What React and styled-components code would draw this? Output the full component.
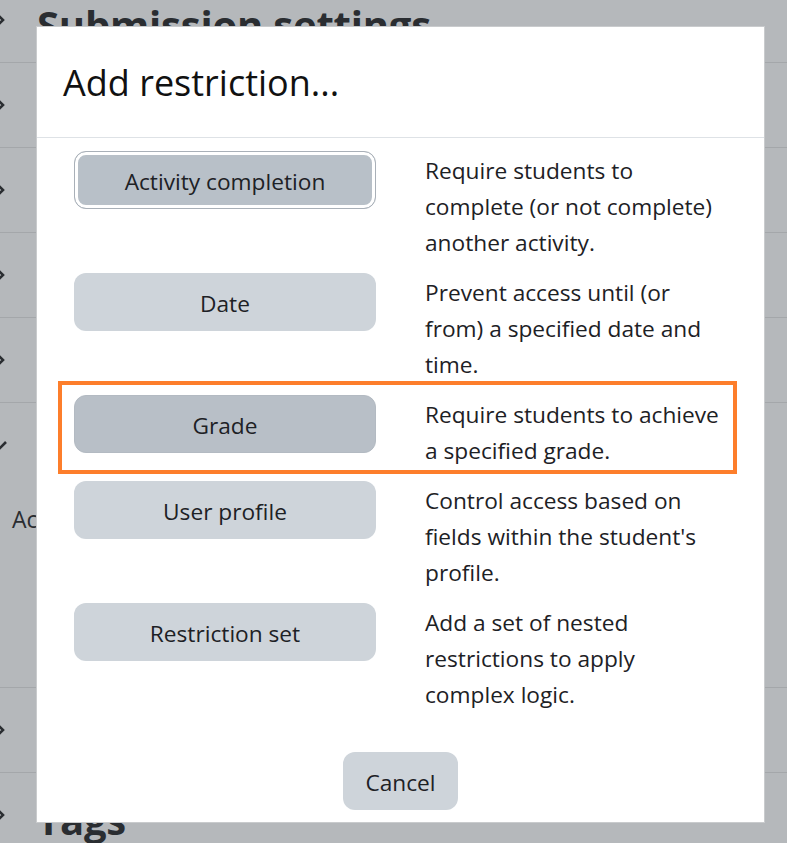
import styled, { createGlobalStyle, css } from "styled-components";

const GlobalStyle = createGlobalStyle`
  html, body {
    margin: 0;
    padding: 0;
    background: #b5b8bb;
    overflow: hidden;
  }
  body {
    font-family: "Open Sans", "Noto Sans", "Liberation Sans", sans-serif;
    color: #1d2125;
  }
`;

const Page = styled.div`
  margin-top: -22px;
  margin-left: -8px;
  display: flex;
  flex-direction: column;
`;

const Section = styled.section`
  border-bottom: 1px solid #a4a7aa;
  min-height: ${(p) => p.$height || 84}px;
  display: flex;
  flex-direction: column;
  flex-shrink: 0;
`;

const SectionHead = styled.div`
  height: 84px;
  display: flex;
  align-items: center;
  gap: 29px;
  color: #2a2d31;
`;

const SectionTitle = styled.h3`
  margin: 8px 0 0;
  font-size: 40px;
  font-weight: 700;
  letter-spacing: -0.2px;
`;

const SectionBody = styled.div`
  padding: 16px 0 0 20px;
  font-size: 23px;
  color: #2a2d31;
`;

const Chevron = ({ down }) => (
  <svg width="16" height="16" viewBox="0 0 16 16" fill="none">
    {down ? (
      <path d="M2 5l6 6 6-6" stroke="#2a2d31" strokeWidth="2.6" />
    ) : (
      <path d="M5 2l6 6-6 6" stroke="#2a2d31" strokeWidth="2.6" />
    )}
  </svg>
);

/* ---- modal ---- */

const Backdrop = styled.div`
  position: fixed;
  inset: 0;
  display: flex;
  justify-content: flex-start;
  align-items: flex-start;
  padding: 26px 0 0 36px;
`;

const Modal = styled.div`
  width: 729px;
  background: #fff;
  border: 1px solid #c9cbcd;
  box-sizing: border-box;
  display: flex;
  flex-direction: column;
`;

const Header = styled.div`
  height: 110px;
  display: flex;
  align-items: center;
  padding: 0 26px;
  border-bottom: 1px solid #dee2e6;
`;

const Title = styled.h5`
  margin: 2px 0 0;
  font-size: 36px;
  font-weight: 400;
  line-height: 1.2;
  color: #111;
`;

const Body = styled.div`
  padding: 13px 37px 0;
  display: flex;
  flex-direction: column;
  gap: 12px;
`;

const Row = styled.div`
  position: relative;
  display: grid;
  grid-template-columns: 302px 300px;
  column-gap: 49px;
  align-items: start;
`;

const Highlight = styled.div`
  position: absolute;
  left: -16px;
  top: -14px;
  width: 679px;
  height: 93px;
  border: 4px solid #fd7e2b;
  box-sizing: border-box;
  pointer-events: none;
`;

const Button = styled.button`
  font-family: inherit;
  font-size: 22.7px;
  line-height: 36px;
  color: #1d2125;
  height: 58px;
  padding: 3px 21px 0;
  border: 1px solid transparent;
  border-radius: 12px;
  background: #ced4da;
  cursor: pointer;

  ${(p) =>
    p.$active &&
    css`
      background: #b8bfc7;
      border-color: #b3bac2;
    `}

  ${(p) =>
    p.$focused &&
    css`
      background: #b8c0c8;
      border-color: #a9b0b8;
      box-shadow: inset 0 0 0 3px #fff;
    `}
`;

const Description = styled.p`
  margin: 2px 0 0;
  font-size: 22.7px;
  line-height: 36px;
`;

const Footer = styled.div`
  display: flex;
  justify-content: center;
  padding: 39px 0 12px;
`;

const options = [
  {
    label: "Activity completion",
    text: "Require students to complete (or not complete) another activity.",
    focused: true,
  },
  {
    label: "Date",
    text: "Prevent access until (or from) a specified date and time.",
  },
  {
    label: "Grade",
    text: "Require students to achieve a specified grade.",
    active: true,
    highlight: true,
  },
  {
    label: "User profile",
    text: "Control access based on fields within the student's profile.",
  },
  {
    label: "Restriction set",
    text: "Add a set of nested restrictions to apply complex logic.",
  },
];

const sections = [
  "Submission settings",
  "Feedback types",
  "Feedback settings",
  "Common module settings",
  "Completion",
];

const App = () => {
  return (
    <>
      <GlobalStyle />
      <Page>
        {sections.map((s) => (
          <Section key={s}>
            <SectionHead>
              <Chevron />
              <SectionTitle>{s}</SectionTitle>
            </SectionHead>
          </Section>
        ))}
        <Section $height={284}>
          <SectionHead>
            <Chevron down />
            <SectionTitle>Restrict access</SectionTitle>
          </SectionHead>
          <SectionBody>Access restrictions</SectionBody>
        </Section>
        <Section>
          <SectionHead>
            <Chevron />
            <SectionTitle>Competencies</SectionTitle>
          </SectionHead>
        </Section>
        <Section>
          <SectionHead>
            <Chevron />
            <SectionTitle>Tags</SectionTitle>
          </SectionHead>
        </Section>
      </Page>

      <Backdrop>
        <Modal role="dialog" aria-label="Add restriction...">
          <Header>
            <Title>Add restriction...</Title>
          </Header>
          <Body>
            {options.map((o) => (
              <Row key={o.label}>
                {o.highlight && <Highlight />}
                <Button $active={o.active} $focused={o.focused}>
                  {o.label}
                </Button>
                <Description>{o.text}</Description>
              </Row>
            ))}
          </Body>
          <Footer>
            <Button>Cancel</Button>
          </Footer>
        </Modal>
      </Backdrop>
    </>
  );
};

export default App;
